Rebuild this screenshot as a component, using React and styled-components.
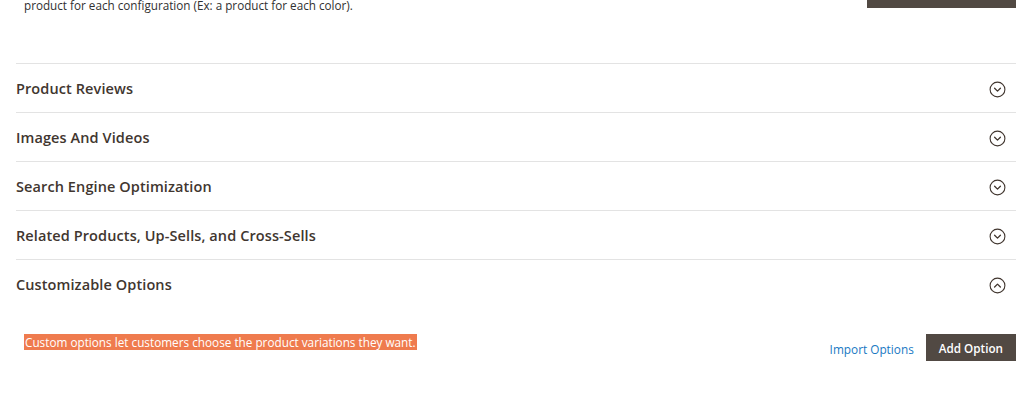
import React from "react";
import styled, { createGlobalStyle } from "styled-components";

const Global = createGlobalStyle`
  html, body { margin: 0; padding: 0; background: #fff; overflow: hidden; }
  body { font-family: "Open Sans", "Liberation Sans", sans-serif; color: #303030; }
`;

const Page = styled.div`
  padding: 0 8px 0 16px;
  width: 1000px;
`;

const TopRow = styled.div`
  display: flex;
  justify-content: space-between;
  align-items: flex-end;
  margin-top: -26px;
  height: 34px;
  margin-bottom: 55px;
`;

const TopText = styled.p`
  margin: 0 0 -6px 8px;
  font-size: 11.7px;
  line-height: 18px;
  color: #303030;
`;

const DarkButton = styled.button`
  font-family: inherit;
  background: #514943;
  border: 1px solid #514943;
  color: #fff;
  font-size: 11.7px;
  font-weight: 600;
  height: ${(p) => p.$h || 27}px;
  width: ${(p) => (p.$w ? `${p.$w}px` : "auto")};
  padding: 0 12px;
  cursor: pointer;
  box-sizing: border-box;
`;

const Section = styled.div`
  border-top: 1px solid #e3e3e3;
`;

const Header = styled.div`
  height: 48px;
  display: flex;
  align-items: center;
  justify-content: space-between;
  padding-right: 10px;
`;

const Title = styled.span`
  font-size: 14.5px;
  font-weight: 600;
  color: #41362f;
  letter-spacing: 0.1px;
`;

const IconWrap = styled.span`
  display: flex;
  transform: translateY(1px);
`;

const Content = styled.div`
  display: flex;
  justify-content: space-between;
  align-items: center;
  padding: 26px 0 0 8px;
`;

const Highlight = styled.span`
  background: #ef7b4e;
  color: #fff;
  font-size: 11.75px;
  line-height: 16px;
  padding: 0 1px;
  align-self: flex-start;
  margin-top: 0;
`;

const Actions = styled.div`
  display: flex;
  align-items: center;
  gap: 12px;
`;

const LinkButton = styled.a`
  color: #1979c3;
  font-size: 11.8px;
  text-decoration: none;
  cursor: pointer;
  transform: translateY(1px);
`;

const Chevron = ({ up }) => (
  <svg width="17" height="17" viewBox="0 0 17 17" fill="none">
    <circle cx="8.5" cy="8.5" r="7.4" stroke="#41362f" strokeWidth="1.1" />
    {up ? (
      <path d="M5.6 10 L8.5 7.1 L11.4 10" stroke="#41362f" strokeWidth="1.3" strokeLinecap="round" strokeLinejoin="round" />
    ) : (
      <path d="M5.6 7.2 L8.5 10.1 L11.4 7.2" stroke="#41362f" strokeWidth="1.3" strokeLinecap="round" strokeLinejoin="round" />
    )}
  </svg>
);

const sections = [
  "Product Reviews",
  "Images And Videos",
  "Search Engine Optimization",
  "Related Products, Up-Sells, and Cross-Sells",
];

export default function App() {
  return (
    <Page>
      <Global />
      <TopRow>
        <TopText>product for each configuration (Ex: a product for each color).</TopText>
        <DarkButton $h={34} $w={149}>Edit Configurations</DarkButton>
      </TopRow>
      {sections.map((s) => (
        <Section key={s}>
          <Header>
            <Title>{s}</Title>
            <IconWrap>
              <Chevron />
            </IconWrap>
          </Header>
        </Section>
      ))}
      <Section>
        <Header>
          <Title>Customizable Options</Title>
          <IconWrap>
            <Chevron up />
          </IconWrap>
        </Header>
        <Content>
          <Highlight>Custom options let customers choose the product variations they want.</Highlight>
          <Actions>
            <LinkButton>Import Options</LinkButton>
            <DarkButton $h={27}>Add Option</DarkButton>
          </Actions>
        </Content>
      </Section>
    </Page>
  );
}
